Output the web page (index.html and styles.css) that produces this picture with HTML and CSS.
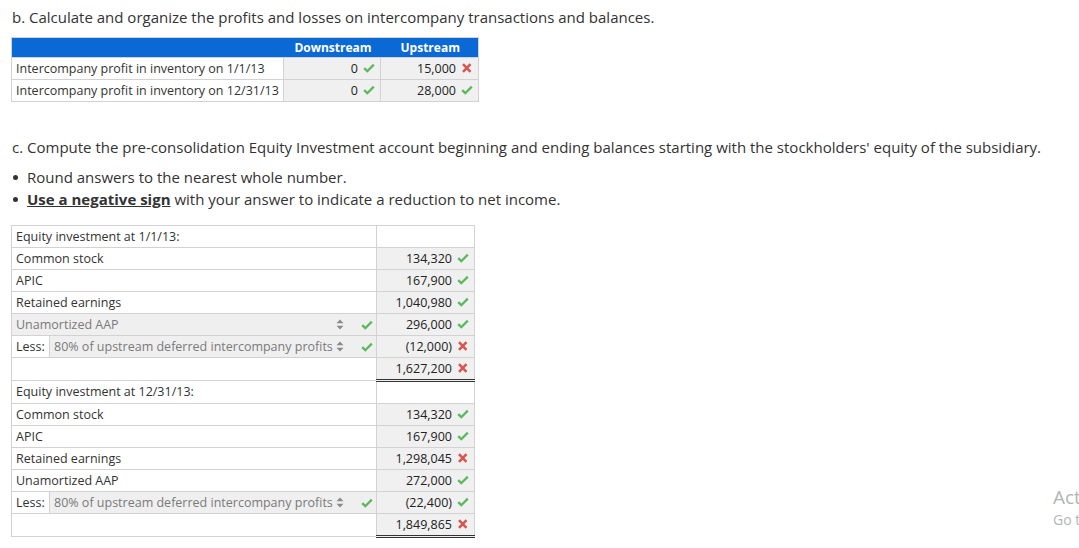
FILE: index.html
```html
<!DOCTYPE html>
<html>
<head>
<meta charset="utf-8">
<link rel="stylesheet" href="styles.css">
</head>
<body>
<p class="q q-b">b. Calculate and organize the profits and losses on intercompany transactions and balances.</p>
<table class="t1">
  <colgroup><col class="c-lab"><col class="c-v1"><col class="c-v2"></colgroup>
  <thead>
    <tr><th></th><th>Downstream</th><th>Upstream</th></tr>
  </thead>
  <tbody>
    <tr>
      <td class="lab">Intercompany profit in inventory on 1/1/13</td>
      <td class="val"><span class="num">0</span><svg class="ic" width="12" height="10" viewBox="0 0 12 10"><path d="M1.2 5.2 L4.3 8.2 L10.8 1.6" stroke="#5cb85c" stroke-width="2.3" fill="none"/></svg></td>
      <td class="val"><span class="num">15,000</span><svg class="ic" width="12" height="10" viewBox="0 0 12 10"><path d="M2 1.2 L9.5 8.8 M9.5 1.2 L2 8.8" stroke="#d9534f" stroke-width="2.5" fill="none"/></svg></td>
    </tr>
    <tr>
      <td class="lab">Intercompany profit in inventory on 12/31/13</td>
      <td class="val"><span class="num">0</span><svg class="ic" width="12" height="10" viewBox="0 0 12 10"><path d="M1.2 5.2 L4.3 8.2 L10.8 1.6" stroke="#5cb85c" stroke-width="2.3" fill="none"/></svg></td>
      <td class="val"><span class="num">28,000</span><svg class="ic" width="12" height="10" viewBox="0 0 12 10"><path d="M1.2 5.2 L4.3 8.2 L10.8 1.6" stroke="#5cb85c" stroke-width="2.3" fill="none"/></svg></td>
    </tr>
  </tbody>
</table>

<p class="q q-c">c. Compute the pre-consolidation Equity Investment account beginning and ending balances starting with the stockholders' equity of the subsidiary.</p>
<ul class="bul">
  <li>Round answers to the nearest whole number.</li>
  <li><strong class="ul">Use a negative sign</strong> with your answer to indicate a reduction to net income.</li>
</ul>

<table class="t2">
  <colgroup><col class="c-less"><col class="c-desc"><col class="c-amt"></colgroup>
  <tbody>
    <tr>
      <td class="lab" colspan="2">Equity investment at 1/1/13:</td>
      <td class="amt-blank"></td>
    </tr>
    <tr>
      <td class="lab" colspan="2">Common stock</td>
      <td class="val"><span class="num">134,320</span><svg class="ic" width="12" height="10" viewBox="0 0 12 10"><path d="M1.2 5.2 L4.3 8.2 L10.8 1.6" stroke="#5cb85c" stroke-width="2.3" fill="none"/></svg></td>
    </tr>
    <tr>
      <td class="lab" colspan="2">APIC</td>
      <td class="val"><span class="num">167,900</span><svg class="ic" width="12" height="10" viewBox="0 0 12 10"><path d="M1.2 5.2 L4.3 8.2 L10.8 1.6" stroke="#5cb85c" stroke-width="2.3" fill="none"/></svg></td>
    </tr>
    <tr>
      <td class="lab" colspan="2">Retained earnings</td>
      <td class="val"><span class="num">1,040,980</span><svg class="ic" width="12" height="10" viewBox="0 0 12 10"><path d="M1.2 5.2 L4.3 8.2 L10.8 1.6" stroke="#5cb85c" stroke-width="2.3" fill="none"/></svg></td>
    </tr>
    <tr>
      <td class="sel" colspan="2">
        <div class="sel-in"><span class="sel-txt">Unamortized AAP</span><svg class="arr" width="8" height="11" viewBox="0 0 8 11"><path d="M4 0.5 L7.5 4.3 H0.5 Z M4 10.5 L7.5 6.7 H0.5 Z" fill="#8a8a8a"/></svg><svg class="ic sel-ic" width="12" height="10" viewBox="0 0 12 10"><path d="M1.2 5.2 L4.3 8.2 L10.8 1.6" stroke="#5cb85c" stroke-width="2.3" fill="none"/></svg></div>
      </td>
      <td class="val"><span class="num">296,000</span><svg class="ic" width="12" height="10" viewBox="0 0 12 10"><path d="M1.2 5.2 L4.3 8.2 L10.8 1.6" stroke="#5cb85c" stroke-width="2.3" fill="none"/></svg></td>
    </tr>
    <tr>
      <td class="lab less">Less:</td>
      <td class="sel">
        <div class="sel-in"><span class="sel-txt">80% of upstream deferred intercompany profits</span><svg class="arr" width="8" height="11" viewBox="0 0 8 11"><path d="M4 0.5 L7.5 4.3 H0.5 Z M4 10.5 L7.5 6.7 H0.5 Z" fill="#8a8a8a"/></svg><svg class="ic sel-ic" width="12" height="10" viewBox="0 0 12 10"><path d="M1.2 5.2 L4.3 8.2 L10.8 1.6" stroke="#5cb85c" stroke-width="2.3" fill="none"/></svg></div>
      </td>
      <td class="val"><span class="num">(12,000)</span><svg class="ic" width="12" height="10" viewBox="0 0 12 10"><path d="M2 1.2 L9.5 8.8 M9.5 1.2 L2 8.8" stroke="#d9534f" stroke-width="2.5" fill="none"/></svg></td>
    </tr>
    <tr>
      <td class="lab" colspan="2"></td>
      <td class="val total"><span class="num">1,627,200</span><svg class="ic" width="12" height="10" viewBox="0 0 12 10"><path d="M2 1.2 L9.5 8.8 M9.5 1.2 L2 8.8" stroke="#d9534f" stroke-width="2.5" fill="none"/></svg></td>
    </tr>

    <tr>
      <td class="lab" colspan="2">Equity investment at 12/31/13:</td>
      <td class="amt-blank"></td>
    </tr>
    <tr>
      <td class="lab" colspan="2">Common stock</td>
      <td class="val"><span class="num">134,320</span><svg class="ic" width="12" height="10" viewBox="0 0 12 10"><path d="M1.2 5.2 L4.3 8.2 L10.8 1.6" stroke="#5cb85c" stroke-width="2.3" fill="none"/></svg></td>
    </tr>
    <tr>
      <td class="lab" colspan="2">APIC</td>
      <td class="val"><span class="num">167,900</span><svg class="ic" width="12" height="10" viewBox="0 0 12 10"><path d="M1.2 5.2 L4.3 8.2 L10.8 1.6" stroke="#5cb85c" stroke-width="2.3" fill="none"/></svg></td>
    </tr>
    <tr>
      <td class="lab" colspan="2">Retained earnings</td>
      <td class="val"><span class="num">1,298,045</span><svg class="ic" width="12" height="10" viewBox="0 0 12 10"><path d="M2 1.2 L9.5 8.8 M9.5 1.2 L2 8.8" stroke="#d9534f" stroke-width="2.5" fill="none"/></svg></td>
    </tr>
    <tr>
      <td class="lab" colspan="2">Unamortized AAP</td>
      <td class="val"><span class="num">272,000</span><svg class="ic" width="12" height="10" viewBox="0 0 12 10"><path d="M1.2 5.2 L4.3 8.2 L10.8 1.6" stroke="#5cb85c" stroke-width="2.3" fill="none"/></svg></td>
    </tr>
    <tr>
      <td class="lab less">Less:</td>
      <td class="sel">
        <div class="sel-in"><span class="sel-txt">80% of upstream deferred intercompany profits</span><svg class="arr" width="8" height="11" viewBox="0 0 8 11"><path d="M4 0.5 L7.5 4.3 H0.5 Z M4 10.5 L7.5 6.7 H0.5 Z" fill="#8a8a8a"/></svg><svg class="ic sel-ic" width="12" height="10" viewBox="0 0 12 10"><path d="M1.2 5.2 L4.3 8.2 L10.8 1.6" stroke="#5cb85c" stroke-width="2.3" fill="none"/></svg></div>
      </td>
      <td class="val boxed"><span class="num">(22,400)</span><svg class="ic" width="12" height="10" viewBox="0 0 12 10"><path d="M1.2 5.2 L4.3 8.2 L10.8 1.6" stroke="#5cb85c" stroke-width="2.3" fill="none"/></svg></td>
    </tr>
    <tr>
      <td class="lab" colspan="2"></td>
      <td class="val total"><span class="num">1,849,865</span><svg class="ic" width="12" height="10" viewBox="0 0 12 10"><path d="M2 1.2 L9.5 8.8 M9.5 1.2 L2 8.8" stroke="#d9534f" stroke-width="2.5" fill="none"/></svg></td>
    </tr>
  </tbody>
</table>

<div class="wm">
  <div class="wm-1">Activate Windows</div>
  <div class="wm-2">Go to Settings to activate Windows.</div>
</div>
</body>
</html>
```

FILE: styles.css
```css
html, body {
  margin: 0;
  padding: 0;
  background: #fff;
  overflow: hidden;
}
body {
  font-family: "Open Sans", "DejaVu Sans", sans-serif;
  color: #333;
  padding: 6px 11px 0 11px;
  position: relative;
  height: 542px;
}
.q {
  margin: 0;
  font-size: 15px;
  line-height: 22px;
  padding-left: 1px;
}
.q-c {
  margin-top: 34px;
}
.bul {
  margin: 8px 0 0 0;
  padding: 0;
  list-style: none;
  font-size: 15px;
  line-height: 22px;
}
.bul li {
  position: relative;
  padding-left: 16px;
}
.bul li::before {
  content: "";
  position: absolute;
  left: 2px;
  top: 9px;
  width: 5px;
  height: 5px;
  border-radius: 50%;
  background: #333;
}
.ul {
  font-weight: 700;
  text-decoration: underline;
}

table {
  border-collapse: collapse;
  table-layout: fixed;
  font-size: 12.5px;
}
td, th {
  padding: 0;
}
.t1 {
  margin-top: 9px;
  width: 467px;
  border: 1px solid #d2d2d2;
}
.t1 .c-lab { width: 272px; }
.t1 .c-v1 { width: 97px; }
.t1 .c-v2 { width: 98px; }
.t1 th {
  background: #0b69d6;
  color: #fff;
  font-weight: 700;
  font-size: 12px;
  height: 19px;
  line-height: 19px;
  text-align: center;
  padding-left: 2px;
}
.t1 td {
  height: 21px;
  border: 1px solid #d2d2d2;
}

.lab {
  padding-left: 4px;
  background: #fff;
  color: #333;
  line-height: 20px;
  white-space: nowrap;
}
.val {
  background: #f0f0f0;
  text-align: right;
  white-space: nowrap;
  padding-right: 5px;
  color: #222;
  line-height: 20px;
}
.num {
  vertical-align: middle;
}
.ic {
  display: inline-block;
  vertical-align: middle;
  margin-left: 5px;
  position: relative;
  top: -1px;
}

.t2 {
  margin-top: 15px;
  width: 463px;
  border: 1px solid #d2d2d2;
}
.t2 .c-less { width: 38px; }
.t2 .c-desc { width: 327px; }
.t2 .c-amt { width: 98px; }
.t2 td {
  height: 21px;
  border: 1px solid #d2d2d2;
}
.amt-blank {
  background: #fff;
}
.sel {
  background: #efefef;
  color: #7a7a7a;
}
.sel-in {
  display: flex;
  align-items: center;
  padding-left: 4px;
  padding-right: 3px;
  white-space: nowrap;
}
.sel-txt {
  flex: 1;
  line-height: 20px;
}
.arr {
  display: block;
  margin-right: 17px;
}
.sel-ic {
  margin-left: 0;
  top: 0;
}
.less {
  padding-left: 4px;
}
.t2 td.total {
  border-top: 1px solid #333;
  border-bottom: 3px double #333;
}
.t2 td.boxed {
  border-top: 1px solid #333;
}

.wm {
  position: absolute;
  left: 1053px;
  top: 484px;
  color: #b4b4b4;
  white-space: nowrap;
}
.wm-1 {
  font-size: 19px;
  line-height: 26px;
}
.wm-2 {
  font-size: 14px;
  line-height: 20px;
}
```
